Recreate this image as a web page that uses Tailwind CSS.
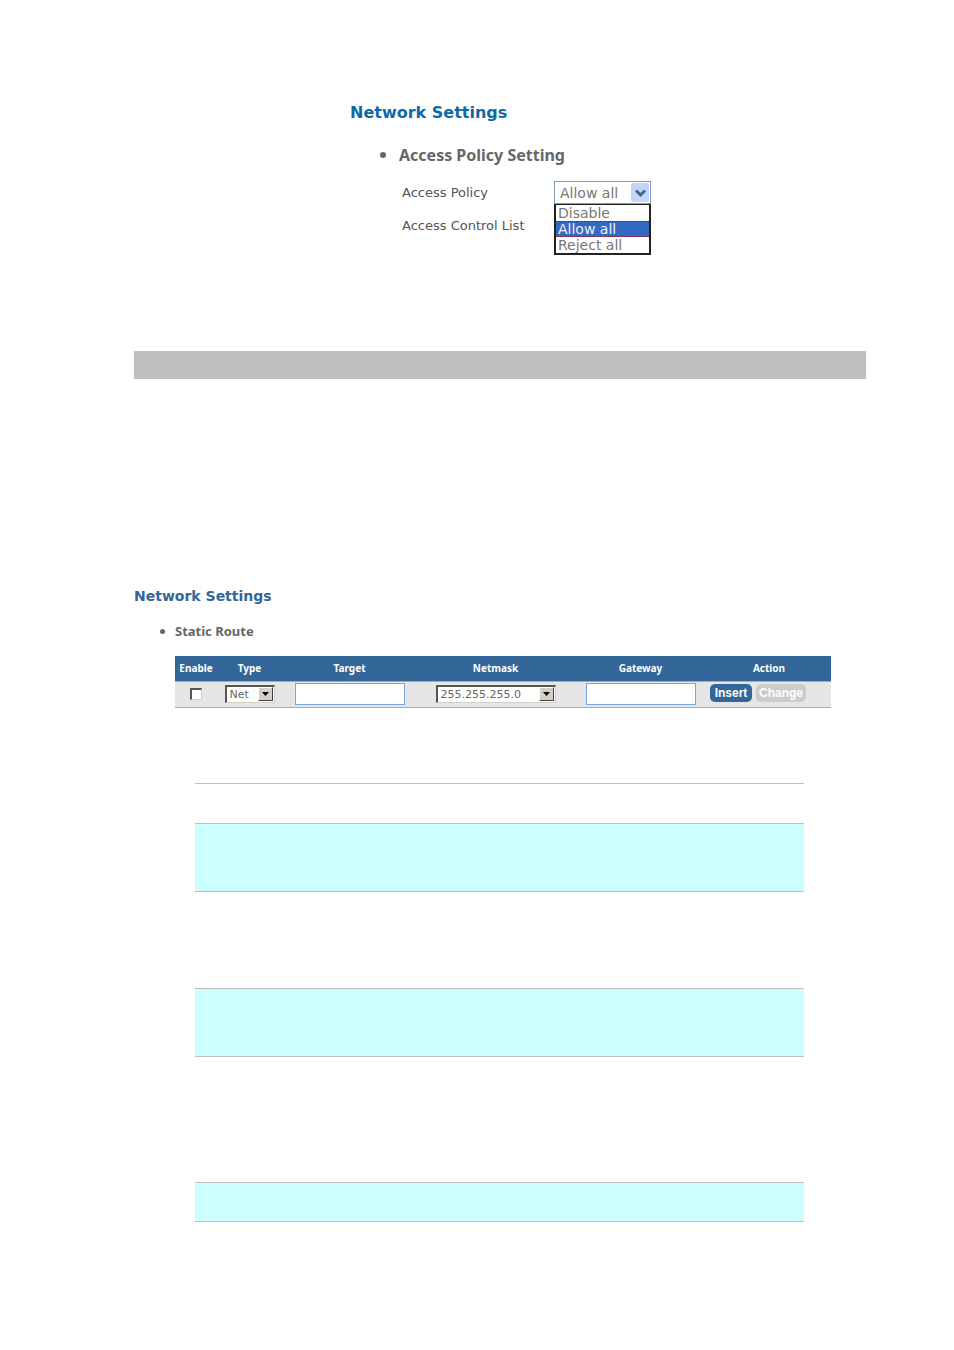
<!DOCTYPE html>
<html lang="en">
  <head>
    <meta charset="UTF-8" />
    <meta name="viewport" content="width=device-width, initial-scale=1.0" />
    <title>Network Settings</title>
    <script src="https://cdn.jsdelivr.net/npm/@tailwindcss/browser@4"></script>
  </head>
  <body class="bg-white min-h-screen font-['DejaVu_Sans',sans-serif] text-[#666666]">
    <main class="pt-[103px] pl-[134px] pr-[88px] pb-32">
      <!-- Access Policy -->
      <section class="w-[301px] h-[248px] ml-[216px]">
        <h1 class="text-[16px] leading-5 font-bold text-[#0f69a5]">
          Network Settings
        </h1>
        <h2 class="flex items-center mt-[22px] ml-[30px] font-['Noto_Sans',sans-serif] text-[16px] leading-5 font-bold">
          <span class="size-[6px] mr-[13px] rounded-full bg-[#666666]"></span>
          Access Policy Setting
        </h2>
        <div class="flex items-center justify-between mt-4 ml-[52px]">
          <label for="policy" class="text-[13px] leading-4 text-[#555555]">Access Policy</label>
          <div class="relative w-[97px] h-[23px] text-[14px]">
            <select
              id="policy"
              class="block appearance-none w-full h-[23px] pl-[5px] border border-[#7f9db9] bg-white leading-5 text-[#777777]"
            >
              <option>Disable</option>
              <option selected>Allow all</option>
              <option>Reject all</option>
            </select>
            <span class="absolute top-[2px] right-[2px] flex items-center justify-center w-[18px] h-[19px] rounded-xs bg-[#c4d5fc] pointer-events-none">
              <svg class="w-[11px] h-[8px]" viewBox="0 0 11 8" fill="none" stroke="#4d6185" stroke-width="3">
                <path d="M1 1.5 5.5 6 10 1.5" />
              </svg>
            </span>
            <ul
              role="listbox"
              aria-label="Access Policy"
              class="absolute top-[23px] left-0 w-full border-x-2 border-t border-b-2 border-[#222222] bg-white leading-4 text-[#777777]"
            >
              <li role="option" class="h-4 pl-[2px]">Disable</li>
              <li role="option" aria-selected="true" class="flex items-center h-4 pl-[2px] border-y border-dotted border-[#702050] bg-[#316ac5] text-[#eeeeee]">Allow all</li>
              <li role="option" class="h-4 pl-[2px]">Reject all</li>
            </ul>
          </div>
        </div>
        <p class="mt-[14px] ml-[52px] text-[13px] leading-4 text-[#555555]">Access Control List</p>
      </section>

      <div class="h-7 bg-[#bfbfbf]"></div>

      <!-- Static Route -->
      <section class="mt-[207px]">
        <h1 class="text-[14px] leading-5 font-bold text-[#336699]">
          Network Settings
        </h1>
        <h2 class="flex items-center mt-[15px] ml-[26px] font-['Noto_Sans',sans-serif] text-[13px] leading-5 font-bold">
          <span class="size-[5px] mr-[10px] rounded-full bg-[#666666]"></span>
          Static Route
        </h2>
        <div class="mt-[15px] ml-[41px] mr-[35px]">
          <table class="w-full table-fixed border-collapse">
            <colgroup>
              <col class="w-[42px]" />
              <col class="w-[65px]" />
              <col class="w-[135px]" />
              <col class="w-[157px]" />
              <col class="w-[133px]" />
              <col />
            </colgroup>
            <thead>
              <tr class="h-[25px] border-b border-[#aaaaaa] bg-[#336699] font-['Noto_Sans',sans-serif] text-[10px] leading-4 text-white">
                <th>Enable</th>
                <th>Type</th>
                <th>Target</th>
                <th>Netmask</th>
                <th>Gateway</th>
                <th>Action</th>
              </tr>
            </thead>
            <tbody>
              <tr class="h-[26px] border-b border-[#aaaaaa] bg-[#e6e6e6] text-[11px]">
                <td>
                  <input
                    type="checkbox"
                    aria-label="Enable"
                    class="block appearance-none size-3 mx-auto border-t-2 border-l-2 border-r border-b border-t-[#555555] border-l-[#555555] border-r-[#d4d0c8] border-b-[#d4d0c8] bg-white"
                  />
                </td>
                <td>
                  <div class="relative w-[50px] mx-auto">
                    <select
                      aria-label="Type"
                      class="block appearance-none w-full h-[18px] pl-[3px] border-t-2 border-l-2 border-r border-b border-t-[#555555] border-l-[#555555] border-r-[#d4d0c8] border-b-[#d4d0c8] bg-white leading-4"
                    >
                      <option>Net</option>
                    </select>
                    <span class="absolute top-[2px] right-[2px] flex items-center justify-center w-[15px] h-[14px] border border-t-white border-l-white border-r-[#404040] border-b-[#404040] bg-[#d4d0c8] pointer-events-none">
                      <svg class="w-[7px] h-[4px]" viewBox="0 0 7 4"><path d="M0 0h7L3.5 4z" fill="#000000" /></svg>
                    </span>
                  </div>
                </td>
                <td>
                  <input type="text" aria-label="Target" class="block w-[110px] h-[22px] mx-auto border border-[#7aa7d6] bg-white" />
                </td>
                <td>
                  <div class="relative w-[120px] mx-auto">
                    <select
                      aria-label="Netmask"
                      class="block appearance-none w-full h-[18px] pl-[3px] border-t-2 border-l-2 border-r border-b border-t-[#555555] border-l-[#555555] border-r-[#d4d0c8] border-b-[#d4d0c8] bg-white leading-4"
                    >
                      <option>255.255.255.0</option>
                    </select>
                    <span class="absolute top-[2px] right-[2px] flex items-center justify-center w-[15px] h-[14px] border border-t-white border-l-white border-r-[#404040] border-b-[#404040] bg-[#d4d0c8] pointer-events-none">
                      <svg class="w-[7px] h-[4px]" viewBox="0 0 7 4"><path d="M0 0h7L3.5 4z" fill="#000000" /></svg>
                    </span>
                  </div>
                </td>
                <td>
                  <input type="text" aria-label="Gateway" class="block w-[110px] h-[22px] mx-auto border border-[#7aa7d6] bg-white" />
                </td>
                <td>
                  <div class="flex gap-1 pl-[3px] pb-[2px] font-['Liberation_Sans',sans-serif] text-[12px] leading-4 font-bold text-white">
                    <button type="button" class="w-[42px] h-[18px] rounded-[5px] bg-[#336699]">Insert</button>
                    <button type="button" class="w-[50px] h-[18px] rounded-[5px] bg-[#cccccc]">Change</button>
                  </div>
                </td>
              </tr>
            </tbody>
          </table>
        </div>
      </section>

      <!-- Banded rows -->
      <div class="mt-[75px] ml-[61px] mr-[62px] border-t border-[#bfbfbf]">
        <div class="h-10 border-b border-[#bfbfbf]"></div>
        <div class="h-[68px] border-b border-[#bfbfbf] bg-[#ccffff]"></div>
        <div class="h-[97px] border-b border-[#bfbfbf]"></div>
        <div class="h-[68px] border-b border-[#bfbfbf] bg-[#ccffff]"></div>
        <div class="h-[126px] border-b border-[#bfbfbf]"></div>
        <div class="h-[39px] border-b border-[#bfbfbf] bg-[#ccffff]"></div>
      </div>
    </main>
  </body>
</html>
